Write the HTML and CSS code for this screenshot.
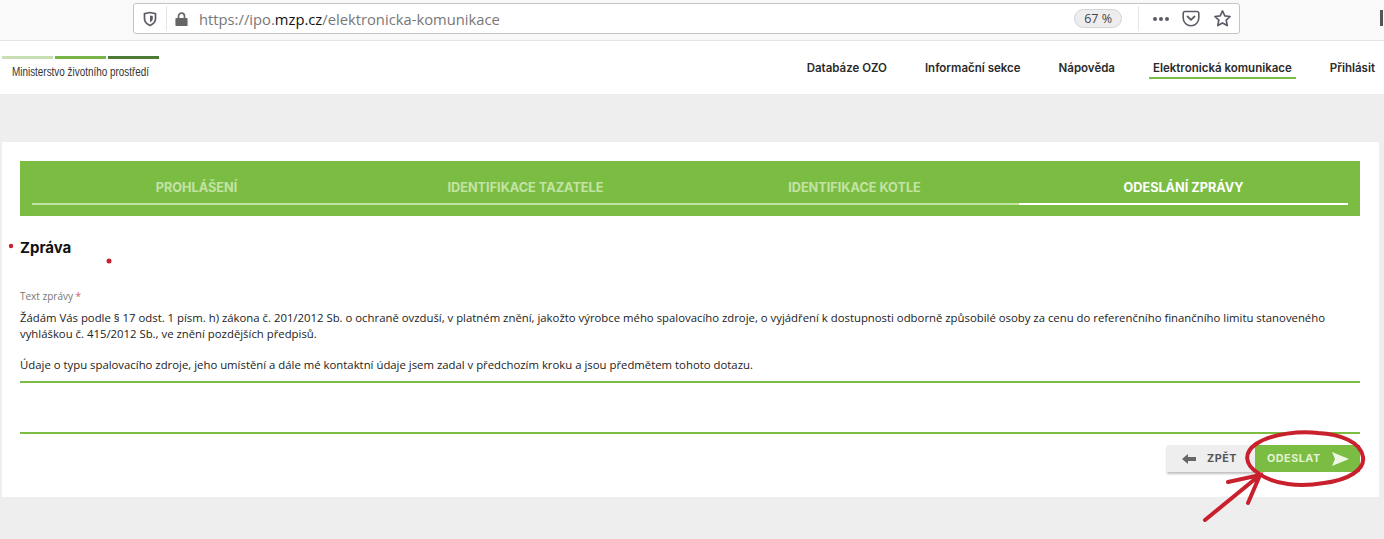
FILE: index.html
```html
<!DOCTYPE html>
<html lang="cs">
<head>
  <meta charset="UTF-8" />
  <title>Elektronická komunikace</title>
  <link rel="stylesheet" href="styles.css">
</head>
<body>

  <div class="browser-bar">
    <div class="urlbar">
      <svg class="ico-shield" width="16" height="16" viewBox="0 0 16 16"><path d="M8 1.500l5.500 1.200v5c0 3.200-2.400 5.400-5.500 6.800-3.100-1.400-5.500-3.600-5.500-6.800v-5z" fill="none" stroke="#5b5b66" stroke-width="1.700"/><path d="M8 4.500l2.800.6v2.600c0 1.500-1.200 2.700-2.800 3.500z" fill="#5b5b66"/></svg>
      <span class="url-sep"></span>
      <svg class="ico-lock" width="15" height="16" viewBox="0 0 16 16"><path d="M4.800 7V5a3.200 3.200 0 0 1 6.400 0v2" fill="none" stroke="#666" stroke-width="1.800"/><rect x="1.500" y="7" width="13" height="8.500" rx="1" fill="#666"/></svg>
      <span class="url-text">https://ipo.<b>mzp.cz</b>/elektronicka-komunikace</span>
      <span class="zoom-pill">67 %</span>
      <span class="url-sep url-sep-right"></span>
      <span class="dots"><i></i><i></i><i></i></span>
      <svg class="ico-pocket" width="18" height="17" viewBox="0 0 18 17"><path d="M3 1.500h12a1.800 1.800 0 0 1 1.800 1.800v4.700a7.800 7.800 0 0 1-15.600 0V3.300A1.800 1.800 0 0 1 3 1.500z" fill="none" stroke="#5b5b66" stroke-width="1.600"/><path d="M5.500 6.500L9 9.800l3.500-3.300" fill="none" stroke="#5b5b66" stroke-width="1.800" stroke-linecap="round"/></svg>
      <svg class="ico-star" width="19" height="19" viewBox="0 0 18 18"><path d="M9 1.800l2.200 4.700 5 .6-3.700 3.500 1 5.100L9 13.200l-4.500 2.500 1-5.100L1.800 7.100l5-.6z" fill="none" stroke="#5b5b66" stroke-width="1.600" stroke-linejoin="round"/></svg>
    </div>
    <span class="toolbar-stub"></span>
  </div>

  <header>
    <div class="logo">
      <div class="logo-bars"><span class="bar-light"></span><span class="bar-mid"></span><span class="bar-dark"></span></div>
      <div class="logo-name">Ministerstvo životního prostředí</div>
    </div>
    <nav class="menu">
      <a href="#">Databáze OZO</a>
      <a href="#">Informační sekce</a>
      <a href="#">Nápověda</a>
      <a href="#" class="active">Elektronická komunikace</a>
      <a href="#">Přihlásit</a>
    </nav>
  </header>

  <div class="container">
    <div class="card">
      <div class="steps">
        <div class="step">Prohlášení</div>
        <div class="step">Identifikace tazatele</div>
        <div class="step">Identifikace kotle</div>
        <div class="step current">Odeslání zprávy</div>
      </div>

      <h2>Zpráva</h2>

      <div class="field-label">Text zprávy <span class="req">*</span></div>
      <div class="message">
        <p>Žádám Vás podle § 17 odst. 1 písm. h) zákona č. 201/2012 Sb. o ochraně ovzduší, v platném znění, jakožto výrobce mého spalovacího zdroje, o vyjádření k dostupnosti odborně způsobilé osoby za cenu do referenčního finančního limitu stanoveného vyhláškou č. 415/2012 Sb., ve znění pozdějších předpisů.</p>
        <p>Údaje o typu spalovacího zdroje, jeho umístění a dále mé kontaktní údaje jsem zadal v předchozím kroku a jsou předmětem tohoto dotazu.</p>
      </div>
      <div class="form-end"></div>

      <div class="buttons">
        <button class="btn btn-back">
          <svg width="14" height="10" viewBox="0 0 14 10"><path d="M0 5l6-5v3h8v4H6v3z" fill="#666"/></svg>
          Zpět
        </button>
        <button class="btn btn-send">
          Odeslat
          <svg width="17" height="14" viewBox="0 0 17 14"><path d="M0 0l17 7-17 7 3-7z" fill="#eef7e4"/></svg>
        </button>
      </div>
    </div>
  </div>

  <!-- red marks drawn over the screenshot -->
  <svg class="marks" width="1384" height="539" viewBox="0 0 1384 539">
    <circle cx="11" cy="246" r="2.200" fill="#c8202c"/>
    <circle cx="109" cy="261" r="2.500" fill="#c8202c"/>
    <path d="M1258 473c-13-8-15-20-2-29 16-11 46-13 62-11 22 1 43 9 45 24 2 13-15 23-39 26-24 4-50 2-66-10z" fill="none" stroke="#c8202c" stroke-width="4"/>
    <path d="M1205 520l55-45M1228 482l32-7-12 28" fill="none" stroke="#c8202c" stroke-width="4" stroke-linecap="round"/>
  </svg>

</body>
</html>
```

FILE: styles.css
```css
body {
  font-family: "Open Sans", Arial, sans-serif;
  background: #eeeeee;
  margin: 0;
  padding: 0;
  height: 539px;
  overflow: hidden;
  position: relative;
}
.browser-bar {
  height: 41px;
  box-sizing: border-box;
  background: #f9f9fa;
  border-bottom: 1px solid #e4e4e6;
  padding: 3px 0 0 133px;
  display: flex;
}
.urlbar {
  width: 1107px;
  height: 31px;
  box-sizing: border-box;
  background: white;
  border: 1px solid #c4c4c6;
  border-radius: 3px;
  display: flex;
  align-items: center;
  padding: 0 7px 0 8px;
}
.url-sep {
  width: 1px;
  height: 25px;
  background: #e6e6e8;
  margin: 0 7px 0 8px;
}
.url-text {
  font-size: 14.750px;
  color: #777;
  margin-left: 10px;
  flex: 1;
}
.url-text b {
  font-weight: 400;
  color: #111;
}
.zoom-pill {
  font-size: 12.500px;
  color: #444;
  background: #ededf0;
  border: 1px solid #d4d4d6;
  border-radius: 10px;
  padding: 0 9px;
  height: 17px;
  line-height: 17px;
  margin-right: 2px;
}
.url-sep-right {
  margin: 0 14px;
}
.dots {
  display: flex;
  gap: 2px;
  margin-right: 13px;
}
.dots i {
  width: 4px;
  height: 4px;
  border-radius: 50%;
  background: #5b5b66;
}
.ico-star {
  margin-left: 13px;
}
.toolbar-stub {
  flex: none;
  width: 3px;
  height: 16px;
  background: #555;
  margin: 7px 0 0 140px;
}

header {
  height: 53px;
  background: white;
  display: flex;
  justify-content: space-between;
  align-items: flex-start;
}
.logo {
  padding: 15px 0 0 2px;
}
.logo-bars {
  display: flex;
  gap: 2px;
}
.logo-bars span {
  width: 51px;
  height: 3px;
}
.bar-light { background: #c8dfb4; }
.bar-mid { background: #78b548; }
.bar-dark { background: #4d7a34; }
.logo-name {
  font-family: "Liberation Sans", Arial, sans-serif;
  font-size: 12px;
  color: #333;
  margin: 6px 0 0 10px;
  transform: scaleX(0.825);
  transform-origin: left;
  white-space: nowrap;
}
.menu {
  display: flex;
  gap: 38px;
  padding: 20px 9px 0 0;
}
.menu a {
  font-family: Inter, Arial, sans-serif;
  font-size: 11.500px;
  font-weight: 600;
  color: #2b2b2b;
  text-decoration: none;
  line-height: 15px;
  height: 16px;
  white-space: nowrap;
}
.menu a.active {
  border-bottom: 2px solid #7bbd42;
  padding: 0 4px;
  margin: 0 -4px;
}

.container {
  padding: 48px 5px 0 2px;
}
.card {
  background: white;
  height: 355px;
  box-sizing: border-box;
  padding: 19px 19px 0 18px;
}
.steps {
  height: 55px;
  box-sizing: border-box;
  background: #7bbd42;
  display: grid;
  grid-template-columns: repeat(4, 1fr);
  padding: 0 12px;
}
.step {
  font-family: Inter, Arial, sans-serif;
  font-size: 12.700px;
  font-weight: 700;
  color: #c3e3a6;
  text-transform: uppercase;
  text-align: center;
  height: 44px;
  line-height: 54px;
  box-sizing: border-box;
  border-bottom: 2px solid #c3e3a6;
}
.step.current {
  color: white;
  border-bottom-color: white;
}
h2 {
  font-family: Inter, Arial, sans-serif;
  font-size: 15px;
  font-weight: 700;
  color: #111;
  margin: 23px 0 0 0;
  line-height: 18px;
}
.field-label {
  font-size: 10px;
  color: #777;
  margin-top: 33px;
  line-height: 12px;
}
.req {
  color: #d0606a;
}
.message {
  font-size: 11.350px;
  line-height: 16px;
  color: #222;
  margin-top: 8px;
  height: 71px;
  border-bottom: 2px solid #7bbd42;
}
.message p {
  margin: 0 0 15px 0;
}
.form-end {
  height: 49px;
  border-bottom: 2px solid #7bbd42;
}
.buttons {
  display: flex;
  justify-content: flex-end;
  margin-top: 11px;
}
.btn {
  font-family: Inter, Arial, sans-serif;
  font-size: 10.800px;
  font-weight: 700;
  letter-spacing: 0.500px;
  text-transform: uppercase;
  height: 27px;
  border: 0;
  display: flex;
  align-items: center;
  padding: 0;
}
.btn-back {
  width: 88px;
  background: #eeeeee;
  color: #555;
  box-shadow: 0 2px 2px rgba(0,0,0,0.25);
  gap: 11px;
  padding-left: 15px;
}
.btn-send {
  width: 105px;
  background: #7bbd42;
  color: #e4f3d4;
  gap: 11px;
  padding-left: 12px;
}

.marks {
  position: absolute;
  left: 0;
  top: 0;
  pointer-events: none;
}
```
